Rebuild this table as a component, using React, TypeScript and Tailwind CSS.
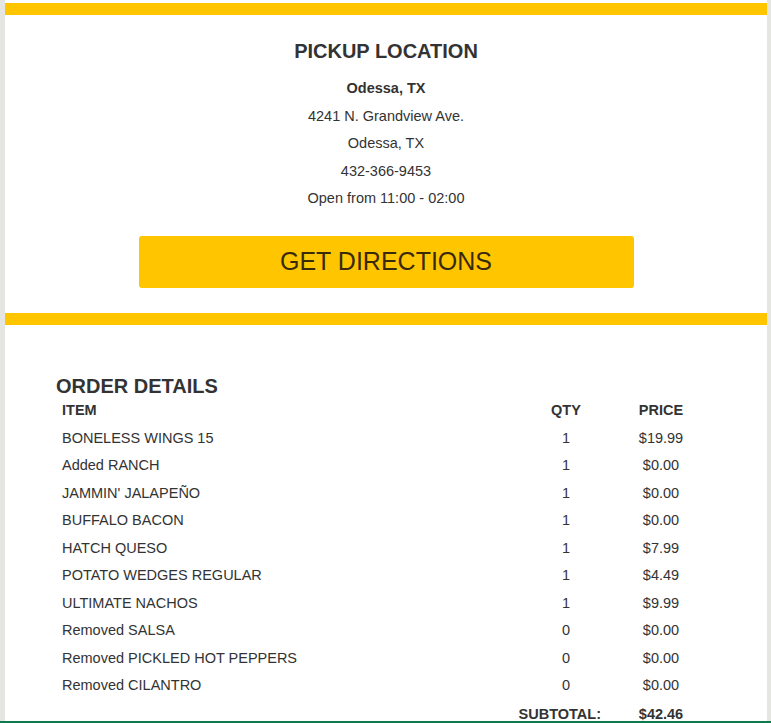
const items = [
	{ name: "BONELESS WINGS 15", qty: "1", price: "$19.99" },
	{ name: "Added RANCH", qty: "1", price: "$0.00" },
	{ name: "JAMMIN' JALAPEÑO", qty: "1", price: "$0.00" },
	{ name: "BUFFALO BACON", qty: "1", price: "$0.00" },
	{ name: "HATCH QUESO", qty: "1", price: "$7.99" },
	{ name: "POTATO WEDGES REGULAR", qty: "1", price: "$4.49" },
	{ name: "ULTIMATE NACHOS", qty: "1", price: "$9.99" },
	{ name: "Removed SALSA", qty: "0", price: "$0.00" },
	{ name: "Removed PICKLED HOT PEPPERS", qty: "0", price: "$0.00" },
	{ name: "Removed CILANTRO", qty: "0", price: "$0.00" },
]

function PickupLocation() {
	return (
		<div className="flex flex-col items-center">
			<h2 className="mt-[24px] h-[24px] leading-[24px] text-[20px] font-bold">PICKUP LOCATION</h2>
			<div className="mt-[12px] flex flex-col items-center text-[14.5px] leading-[27.5px]">
				<span className="font-bold">Odessa, TX</span>
				<span>4241 N. Grandview Ave.</span>
				<span>Odessa, TX</span>
				<span>432-366-9453</span>
				<span>Open from 11:00 - 02:00</span>
			</div>
			<a className="mt-[23px] w-[495px] h-[52px] rounded-[3px] bg-[#ffc600] flex items-center justify-center text-[25px] text-[#3a2a0c]">
				GET DIRECTIONS
			</a>
		</div>
	)
}

function OrderDetails() {
	return (
		<div className="pl-[51px] pr-[56px] pt-[50px]">
			<h2 className="h-[22.5px] leading-[22px] text-[20px] font-bold">ORDER DETAILS</h2>
			<div className="grid grid-cols-[1fr_90px_100px] text-[14.5px] leading-[27.5px]">
				<span className="pl-[6px] font-bold">ITEM</span>
				<span className="text-center font-bold">QTY</span>
				<span className="text-center font-bold">PRICE</span>
				{items.map((item) => (
					<div key={item.name} className="contents">
						<span className="pl-[6px]">{item.name}</span>
						<span className="text-center">{item.qty}</span>
						<span className="text-center">{item.price}</span>
					</div>
				))}
				<span className="col-span-2 h-[21px] text-right pr-[10px] font-bold leading-[28px]">SUBTOTAL:</span>
				<span className="h-[21px] text-center font-bold leading-[28px]">$42.46</span>
			</div>
		</div>
	)
}

export default function App() {
	return (
		<div className="bg-[#e5e5e1] text-[#333333] font-['Liberation_Sans',Arial,sans-serif]">
			<div className="pl-[5px] pr-[4px]">
				<div className="bg-white pt-[3px]">
					<div className="h-[12px] bg-[#ffc600]" />
					<PickupLocation />
					<div className="mt-[25px] h-[12px] bg-[#ffc600]" />
					<OrderDetails />
				</div>
			</div>
			<div className="h-[3px] bg-[#0d7a4c]" />
		</div>
	)
}
